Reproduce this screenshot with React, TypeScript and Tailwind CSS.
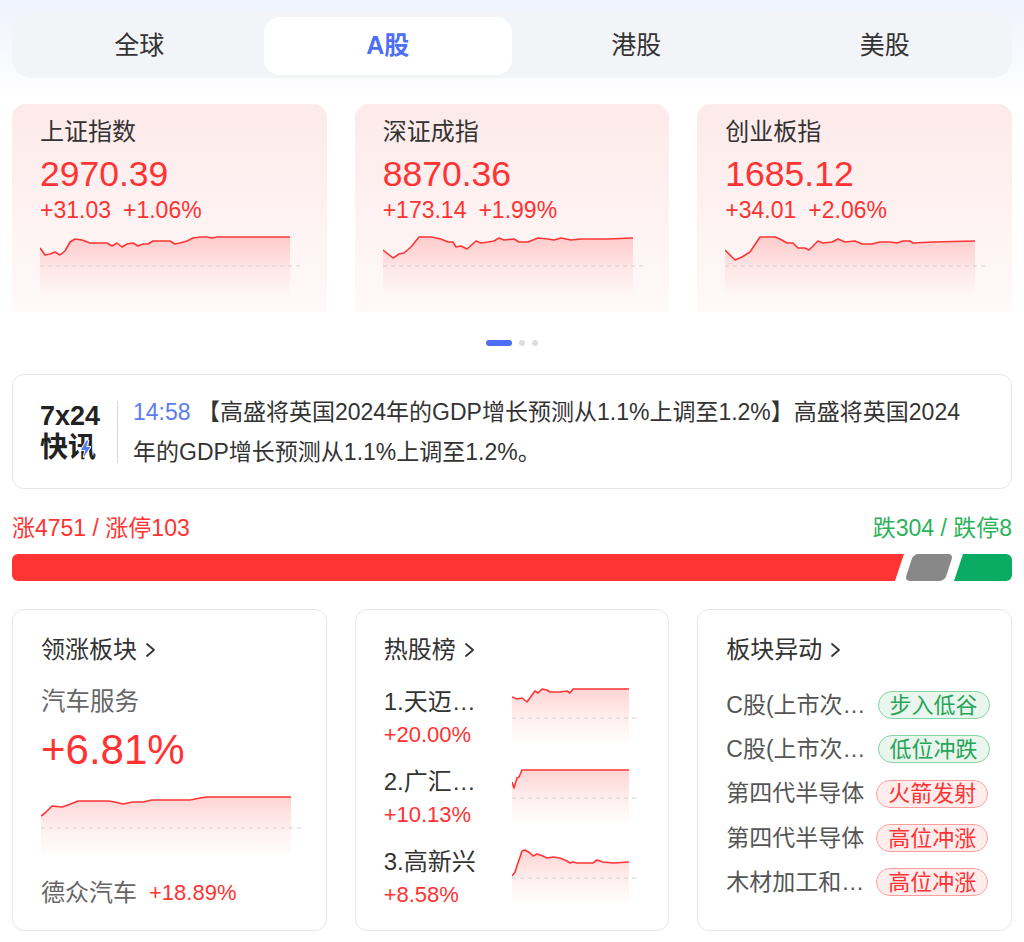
import React from "react";

type P = [number, number];

function Spark({
  pts,
  ox,
  oy,
  w,
  h,
  dashY,
  id,
}: {
  pts: P[];
  ox: number;
  oy: number;
  w: number;
  h: number;
  dashY: number;
  id: string;
}) {
  const rel = pts.map(([x, y]) => [x - ox, y - oy]);
  const line = rel
    .map((p, i) => (i ? "L" : "M") + p[0].toFixed(1) + " " + p[1].toFixed(1))
    .join(" ");
  const first = rel[0];
  const last = rel[rel.length - 1];
  const area = `${line} L${last[0].toFixed(1)} ${h} L${first[0].toFixed(1)} ${h} Z`;
  const dy = dashY - oy;
  return (
    <svg width={w} height={h} className="block shrink-0">
      <defs>
        <linearGradient id={id} x1="0" y1="0" x2="0" y2="1">
          <stop offset="0" stopColor="#ff4a4a" stopOpacity="0.24" />
          <stop offset="0.55" stopColor="#ff4a4a" stopOpacity="0.08" />
          <stop offset="1" stopColor="#ff4a4a" stopOpacity="0" />
        </linearGradient>
      </defs>
      <path d={area} fill={`url(#${id})`} />
      <line x1={0} x2={w} y1={dy} y2={dy} stroke="#d2d2d2" strokeWidth="1" strokeDasharray="4 4" />
      <path d={line} fill="none" stroke="#ff3535" strokeWidth="1.6" strokeLinejoin="round" />
    </svg>
  );
}

const sh: P[] = [
  [40, 248], [45, 255], [50, 254], [55, 252], [60, 255], [65, 251], [70, 242], [75, 239], [82, 240],
  [90, 243], [100, 243], [107, 243], [112, 246], [117, 243], [122, 247], [127, 244], [133, 243],
  [138, 246], [143, 244], [148, 244], [153, 241], [160, 241], [170, 241], [175, 244], [180, 243],
  [187, 241], [193, 238], [200, 237], [207, 237], [212, 238], [217, 237], [227, 237], [233, 237], [290, 237],
];
const sz: P[] = [
  [382, 250], [392, 258], [398, 254], [403, 253], [410, 247], [418, 237], [430, 237], [440, 239],
  [447, 242], [452, 242], [455, 247], [460, 246], [466, 249], [475, 241], [480, 243], [487, 242],
  [493, 241], [498, 238], [503, 240], [513, 239], [518, 242], [527, 242], [537, 238], [547, 239],
  [553, 240], [560, 238], [570, 240], [580, 239], [607, 239], [632, 238],
];
const cy: P[] = [
  [725, 250], [735, 260], [742, 257], [750, 252], [760, 237], [775, 237], [780, 239], [787, 243],
  [793, 243], [798, 248], [805, 248], [809, 250], [818, 241], [823, 243], [832, 242], [838, 239],
  [845, 242], [855, 241], [862, 244], [872, 244], [880, 242], [890, 242], [897, 243], [903, 241],
  [910, 241], [913, 243], [933, 242], [975, 241],
];
const car: P[] = [
  [41, 816], [45, 813], [52, 806], [62, 807], [68, 805], [78, 801], [90, 801], [100, 801], [108, 801],
  [115, 802], [123, 804], [133, 802], [143, 802], [152, 800], [167, 800], [180, 800], [190, 800],
  [200, 798], [207, 797], [220, 797], [233, 797], [250, 797], [291, 797],
];
const h1: P[] = [
  [512, 697], [517, 699], [522, 698], [527, 702], [532, 695], [535, 691], [538, 693], [542, 689],
  [547, 690], [550, 692], [560, 692], [567, 691], [570, 693], [573, 689], [629, 689],
];
const h2: P[] = [[512, 782], [514, 788], [517, 778], [519, 777], [522, 770], [629, 770]];
const h3: P[] = [
  [512, 876], [515, 872], [522, 851], [525, 850], [530, 853], [533, 856], [537, 854], [543, 856],
  [547, 858], [553, 857], [560, 858], [567, 861], [570, 863], [573, 862], [577, 863], [583, 863],
  [593, 863], [597, 860], [603, 862], [613, 863], [629, 862],
];

const indices = [
  { name: "上证指数", val: "2970.39", chg: "+31.03", pct: "+1.06%", pts: sh, ox: 40, id: "g1" },
  { name: "深证成指", val: "8870.36", chg: "+173.14", pct: "+1.99%", pts: sz, ox: 382, id: "g2" },
  { name: "创业板指", val: "1685.12", chg: "+34.01", pct: "+2.06%", pts: cy, ox: 725, id: "g3" },
];

function Chevron() {
  return (
    <svg width="12" height="18" viewBox="0 0 12 18" className="ml-[8px] inline-block">
      <polyline points="2,3 9,9 2,15" fill="none" stroke="#333" strokeWidth="1.8" strokeLinejoin="round" strokeLinecap="round" />
    </svg>
  );
}

const moves = [
  { name: "C股(上市次…", tag: "步入低谷", up: false },
  { name: "C股(上市次…", tag: "低位冲跌", up: false },
  { name: "第四代半导体", tag: "火箭发射", up: true },
  { name: "第四代半导体", tag: "高位冲涨", up: true },
  { name: "木材加工和…", tag: "高位冲涨", up: true },
];

const hots = [
  { name: "1.天迈…", pct: "+20.00%", pts: h1, oy: 687, id: "h1" },
  { name: "2.广汇…", pct: "+10.13%", pts: h2, oy: 767, id: "h2" },
  { name: "3.高新兴", pct: "+8.58%", pts: h3, oy: 847, id: "h3" },
];

export default function App() {
  return (
    <div className="min-h-[942px] w-full bg-[linear-gradient(180deg,#eef2fc_0px,#f8f9fe_50px,#ffffff_100px)] px-[12px] pt-[14px] font-['Liberation_Sans','Noto_Sans_CJK_SC',sans-serif] text-[#333]">
      {/* tabs */}
      <div className="grid h-[64px] grid-cols-4 rounded-[20px] bg-[#f3f4f8] p-[3px]">
        {["全球", "A股", "港股", "美股"].map((t) => (
          <div
            key={t}
            className={
              t === "A股"
                ? "flex items-center justify-center rounded-[16px] bg-white text-[25px] font-bold text-[#4d6ef5]"
                : "flex items-center justify-center text-[25px] text-[#333]"
            }
          >
            {t}
          </div>
        ))}
      </div>

      {/* index cards */}
      <div className="mt-[26px] grid grid-cols-3 gap-[28px]">
        {indices.map((c) => (
          <div key={c.name} className="h-[208px] rounded-t-[14px] bg-gradient-to-b from-[#fdeaea] to-[#fff9f9] pl-[28px] pt-[13px]">
            <div className="text-[24px] leading-[30px] text-[#333]">{c.name}</div>
            <div className="mt-[7px] text-[35.5px] leading-[40px] text-[#ff3333]">{c.val}</div>
            <div className="mt-[3px] flex gap-[12px] text-[23px] leading-[26px] text-[#ff3333]">
              <span>{c.chg}</span>
              <span>{c.pct}</span>
            </div>
            <div className="mt-[11px]">
              <Spark pts={c.pts} ox={c.ox} oy={234} w={262} h={64} dashY={266} id={c.id} />
            </div>
          </div>
        ))}
      </div>

      {/* dots */}
      <div className="mt-[28px] flex h-[6px] items-center justify-center gap-[7px]">
        <div className="h-[6px] w-[26px] rounded-full bg-[#4d6ef5]" />
        <div className="h-[6px] w-[6px] rounded-full bg-[#dcdde2]" />
        <div className="h-[6px] w-[6px] rounded-full bg-[#dcdde2]" />
      </div>

      {/* news */}
      <div className="mt-[28px] flex h-[115px] items-center rounded-[12px] border border-[#e6e6e6] bg-white pl-[27px] pr-[44px]">
        <div className="w-[62px] shrink-0 font-bold text-[#222]">
          <div className="text-[27px] leading-[32px]">7x24</div>
          <div className="relative text-[28px] leading-[32px]">
            快讯
            <svg width="11" height="18" viewBox="0 0 11 18" className="absolute left-[40px] top-[8px]">
              <polygon
                points="6.5,0.5 1,10 5.2,10 3.6,17.5 10.4,7 6.2,7 8.2,0.5"
                fill="#4a7af5"
                stroke="#ffffff"
                strokeWidth="1.8"
                paintOrder="stroke"
              />
            </svg>
          </div>
        </div>
        <div className="ml-[15px] h-[62px] w-px shrink-0 bg-[#d9d9d9]" />
        <div className="ml-[15px] text-[23px] leading-[40px] text-[#333]">
          <span className="text-[#5b7bf0]">14:58</span> 【高盛将英国2024年的GDP增长预测从1.1%上调至1.2%】高盛将英国2024年的GDP增长预测从1.1%上调至1.2%。
        </div>
      </div>

      {/* breadth */}
      <div className="mt-[26px] flex items-center justify-between text-[23px] leading-[26px]">
        <span className="text-[#ff3333]">涨4751 / 涨停103</span>
        <span className="text-[#2bb35a]">跌304 / 跌停8</span>
      </div>
      <div className="mt-[13px] flex h-[27px] gap-[5px]">
        <div className="flex-1 rounded-l-[6px] bg-[#ff3535] [clip-path:polygon(0_0,100%_0,calc(100%_-_9px)_100%,0_100%)]" />
        <div className="w-[40px] -skew-x-[18deg] rounded-[5px] bg-[#888888]" />
        <div className="w-[58px] rounded-r-[6px] bg-[#0aab62] [clip-path:polygon(9px_0,100%_0,100%_100%,0_100%)]" />
      </div>

      {/* bottom cards */}
      <div className="mt-[28px] grid grid-cols-3 gap-[28px]">
        {/* leading sector */}
        <div className="h-[322px] rounded-[12px] border border-[#e8e8e8] bg-white pl-[28px] pt-[25px]">
          <div className="flex items-center text-[24px] leading-[30px] text-[#333]">
            领涨板块
            <Chevron />
          </div>
          <div className="mt-[22px] text-[24.5px] leading-[30px] text-[#666]">汽车服务</div>
          <div className="mt-[9px] text-[42px] leading-[48px] text-[#ff3333]">+6.81%</div>
          <div className="mt-[18px]">
            <Spark pts={car} ox={41} oy={792} w={262} h={66} dashY={828} id="c1" />
          </div>
          <div className="mt-[20px] flex items-center gap-[12px] leading-[30px]">
            <span className="text-[24px] text-[#666]">德众汽车</span>
            <span className="text-[22px] text-[#ff3333]">+18.89%</span>
          </div>
        </div>

        {/* hot stocks */}
        <div className="h-[322px] rounded-[12px] border border-[#e8e8e8] bg-white pl-[28px] pt-[25px]">
          <div className="flex items-center text-[24px] leading-[30px] text-[#333]">
            热股榜
            <Chevron />
          </div>
          <div className="mt-[22px] flex flex-col">
            {hots.map((r) => (
              <div key={r.id} className="flex h-[80px]">
                <div className="w-[128px] shrink-0">
                  <div className="text-[24px] leading-[30px] text-[#333]">{r.name}</div>
                  <div className="mt-[3px] text-[22px] leading-[30px] text-[#ff3333]">{r.pct}</div>
                </div>
                <Spark pts={r.pts} ox={512} oy={r.oy} w={126} h={60} dashY={r.oy + 31} id={r.id} />
              </div>
            ))}
          </div>
        </div>

        {/* sector moves */}
        <div className="h-[322px] rounded-[12px] border border-[#e8e8e8] bg-white pl-[28px] pt-[25px]">
          <div className="flex items-center text-[24px] leading-[30px] text-[#333]">
            板块异动
            <Chevron />
          </div>
          <div className="mt-[18px] flex flex-col">
            {moves.map((m, i) => (
              <div key={i} className="flex h-[44.3px] items-center gap-[12px]">
                <span className="text-[23px] text-[#555]">{m.name}</span>
                <span
                  className={
                    m.up
                      ? "flex h-[28px] items-center rounded-full border border-[#ff9d9d] bg-[#ffeded] px-[11px] text-[22px] text-[#ff3333]"
                      : "flex h-[28px] items-center rounded-full border border-[#86d4a3] bg-[#e8f6ee] px-[11px] text-[22px] text-[#27a459]"
                  }
                >
                  {m.tag}
                </span>
              </div>
            ))}
          </div>
        </div>
      </div>
    </div>
  );
}
